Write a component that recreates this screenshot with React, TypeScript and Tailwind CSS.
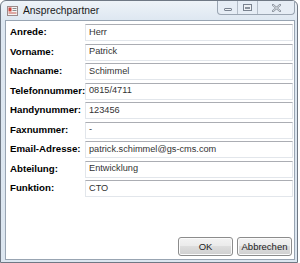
const fields: [string, string][] = [
  ["Anrede:", "Herr"],
  ["Vorname:", "Patrick"],
  ["Nachname:", "Schimmel"],
  ["Telefonnummer:", "0815/4711"],
  ["Handynummer:", "123456"],
  ["Faxnummer:", "-"],
  ["Email-Adresse:", "patrick.schimmel@gs-cms.com"],
  ["Abteilung:", "Entwicklung"],
  ["Funktion:", "CTO"],
];

function WindowIcon() {
  return (
    <svg width="11" height="10" viewBox="0 0 11 10" className="shrink-0">
      <rect x="0.5" y="0.5" width="10" height="9" fill="#f4f4f4" stroke="#9a8a8a" />
      <rect x="1.5" y="1.5" width="3" height="4" fill="#d0443c" />
      <rect x="5.5" y="2" width="4" height="1" fill="#8b8b8b" />
      <rect x="5.5" y="4" width="4" height="1" fill="#8b8b8b" />
      <rect x="1.5" y="6.5" width="8" height="1" fill="#c85a50" />
    </svg>
  );
}

function CaptionButtons() {
  return (
    <div className="flex h-[14px] self-start overflow-hidden rounded-b-[4px] border border-t-0 border-[#9aa5b2] bg-[#e6edf5]">
      <div className="grid w-[20px] place-items-center border-r border-[#b3bcc7]">
        <div className="mt-[3px] h-[3px] w-[8px] rounded-[1px] border border-[#7a8390] bg-[#eef1f4]" />
      </div>
      <div className="grid w-[20px] place-items-center border-r border-[#b3bcc7]">
        <div className="flex h-[7px] w-[9px] items-center justify-center border border-[#7a8390] bg-[#eef1f4]">
          <div className="h-[2px] w-[5px] border border-[#8a929d]" />
        </div>
      </div>
      <div className="grid w-[36px] place-items-center">
        <svg width="9" height="8" viewBox="0 0 9 8">
          <path d="M1 1 L8 7 M8 1 L1 7" stroke="#8a929d" strokeWidth="2.2" strokeLinecap="square" />
          <path d="M1 1 L8 7 M8 1 L1 7" stroke="#eef1f4" strokeWidth="0.8" />
        </svg>
      </div>
    </div>
  );
}

function Button({ children }: { children: string }) {
  return (
    <button className="h-[19px] w-[55px] rounded-[3px] border border-[#8c8c8c] bg-[linear-gradient(#f3f3f3,#ebebeb_45%,#dddddd_50%,#cfcfcf)] text-[9.5px] leading-none text-[#222] shadow-[inset_0_0_0_1px_#fbfbfb]">
      {children}
    </button>
  );
}

export default function App() {
  return (
    <div className="h-[263px] w-[300px] bg-white font-['Liberation_Sans',sans-serif]">
      <div className="flex h-[263px] w-[298px] flex-col rounded-t-[6px] border border-[#6f7884] bg-[linear-gradient(#eef3f8,#dde7f1_20px,#dce6f0)] pb-[2px] pl-[4px] pr-[2px]">
        <div className="flex h-[19px] items-start">
          <div className="flex h-[19px] flex-1 items-center gap-[5px] pl-[2px]">
            <WindowIcon />
            <span className="text-[10.3px] text-[#1a1a1a]">Ansprechpartner</span>
          </div>
          <CaptionButtons />
        </div>
        <div className="flex flex-1 flex-col border border-[#98a4b2] bg-white">
          <div className="flex flex-col gap-[2.5px] pl-[4px] pr-[1px] pt-[3px]">
            {fields.map(([label, value]) => (
              <div key={label} className="flex h-[17px] items-center">
                <span className="w-[75px] shrink-0 whitespace-nowrap text-[9.7px] font-bold text-black">{label}</span>
                <div className="flex h-[17px] flex-1 items-center whitespace-nowrap border border-[#e2e6eb] border-t-[#abadb3] pl-[3px] text-[9.2px] text-[#333]">
                  {value}
                </div>
              </div>
            ))}
          </div>
          <div className="mt-auto mb-[3px] mr-[2px] flex justify-end gap-[4px]">
            <Button>OK</Button>
            <Button>Abbrechen</Button>
          </div>
        </div>
      </div>
    </div>
  );
}
